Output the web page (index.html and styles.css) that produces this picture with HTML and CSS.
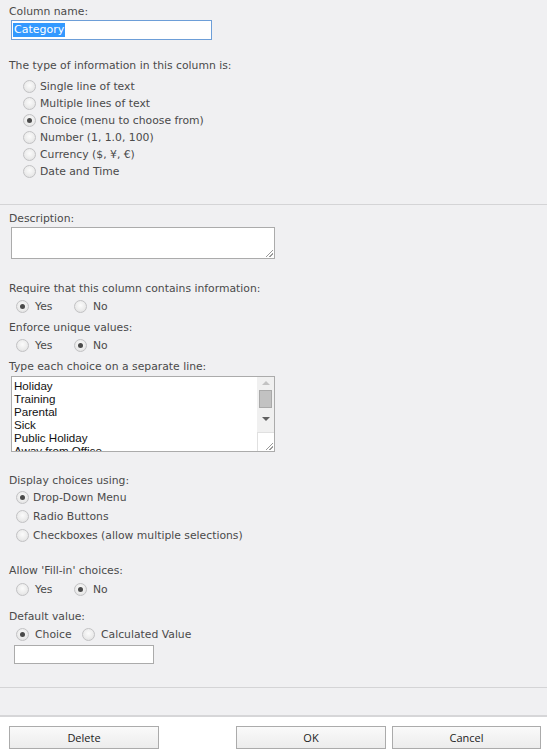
FILE: index.html
```html
<!DOCTYPE html>
<html>
<head>
<meta charset="utf-8">
<link rel="stylesheet" href="styles.css">
</head>
<body>
<div class="page">
  <div class="section s1">
    <div class="label">Column name:</div>
    <div class="textbox focused"><span class="sel">Category</span></div>
    <div class="label gap-type">The type of information in this column is:</div>
    <div class="radio-list indent">
      <div class="row"><span class="radio"></span><span>Single line of text</span></div>
      <div class="row"><span class="radio"></span><span>Multiple lines of text</span></div>
      <div class="row"><span class="radio on"></span><span>Choice (menu to choose from)</span></div>
      <div class="row"><span class="radio"></span><span>Number (1, 1.0, 100)</span></div>
      <div class="row"><span class="radio"></span><span>Currency ($, ¥, €)</span></div>
      <div class="row"><span class="radio"></span><span>Date and Time</span></div>
    </div>
  </div>
  <div class="section s2">
    <div class="label">Description:</div>
    <div class="textarea desc"><span class="grip"></span></div>

    <div class="label m-require">Require that this column contains information:</div>
    <div class="inline-row r-require">
      <span class="opt"><span class="radio on"></span><span>Yes</span></span>
      <span class="opt"><span class="radio"></span><span>No</span></span>
    </div>
    <div class="label m-enforce">Enforce unique values:</div>
    <div class="inline-row r-enforce">
      <span class="opt"><span class="radio"></span><span>Yes</span></span>
      <span class="opt"><span class="radio on"></span><span>No</span></span>
    </div>

    <div class="label m-type">Type each choice on a separate line:</div>
    <div class="choices">
      <div class="lines">
        <div>Holiday</div>
        <div>Training</div>
        <div>Parental</div>
        <div>Sick</div>
        <div>Public Holiday</div>
        <div>Away from Office</div>
      </div>
      <div class="scrollbar">
        <div class="sb-track">
          <span class="arrow up"></span>
          <span class="thumb"></span>
          <span class="arrow down"></span>
        </div>
        <div class="sb-corner"><span class="grip"></span></div>
      </div>
    </div>

    <div class="label m-display">Display choices using:</div>
    <div class="radio-list tall">
      <div class="row"><span class="radio on"></span><span>Drop-Down Menu</span></div>
      <div class="row"><span class="radio"></span><span>Radio Buttons</span></div>
      <div class="row"><span class="radio"></span><span>Checkboxes (allow multiple selections)</span></div>
    </div>

    <div class="label m-allow">Allow 'Fill-in' choices:</div>
    <div class="inline-row r-allow">
      <span class="opt"><span class="radio"></span><span>Yes</span></span>
      <span class="opt"><span class="radio on"></span><span>No</span></span>
    </div>

    <div class="label m-default">Default value:</div>
    <div class="inline-row r-default">
      <span class="opt"><span class="radio on"></span><span>Choice</span></span>
      <span class="opt"><span class="radio"></span><span>Calculated Value</span></span>
    </div>
    <div class="textbox small"></div>
  </div>
  <div class="section s3"></div>
  <div class="footer">
    <button class="btn delete">Delete</button>
    <div class="spacer"></div>
    <button class="btn">OK</button>
    <button class="btn cancel">Cancel</button>
  </div>
</div>
</body>
</html>
```

FILE: styles.css
```css
html, body {
  margin: 0;
  padding: 0;
  background: #ffffff;
}
.page {
  width: 547px;
  height: 754px;
  font-family: "DejaVu Sans", Verdana, sans-serif;
  font-size: 10.8px;
  color: #4a4a4a;
}
.section {
  background: #f0f0f2;
  padding-left: 9px;
}
.s1 {
  padding-top: 5px;
  height: 199px;
  border-bottom: 1px solid #d4d4d6;
}
.s2 {
  padding-top: 7px;
  height: 475px;
  border-bottom: 1px solid #d4d4d6;
}
.s3 {
  height: 27px;
  border-bottom: 2px solid #d6d6d8;
}
.label {
  line-height: 14px;
  height: 14px;
  white-space: nowrap;
}
.textbox {
  box-sizing: border-box;
  background: #ffffff;
  border: 1px solid #ababab;
}
.textbox.focused {
  margin-top: 1px;
  margin-left: 2px;
  width: 201px;
  height: 20px;
  border-color: #6d9ed8;
  padding: 2px 0 0 1px;
  font-family: Tahoma, "DejaVu Sans", sans-serif;
  font-size: 11px;
  line-height: 14px;
}
.sel {
  background: #3399ff;
  color: #ffffff;
  display: inline-block;
  padding: 0 1px;
}
.textbox.small {
  margin-top: 2px;
  margin-left: 5px;
  width: 140px;
  height: 19px;
}
.gap-type { margin-top: 19px; }
.radio-list { margin-top: 5px; }
.radio-list.indent { padding-left: 14px; }
.row {
  height: 17px;
  display: flex;
  align-items: center;
  gap: 4px;
  white-space: nowrap;
}
.radio-list.tall { margin-top: 0; padding-left: 7px; }
.radio-list.tall .row { height: 19px; }
.radio {
  box-sizing: border-box;
  width: 13px;
  height: 13px;
  border-radius: 50%;
  border: 1px solid #c2c2c4;
  background: radial-gradient(circle at 50% 40%, #fbfbfb 0%, #ececec 55%, #dcdcdc 100%);
  display: inline-flex;
  align-items: center;
  justify-content: center;
  flex: none;
}
.radio.on::after {
  content: "";
  width: 5px;
  height: 5px;
  border-radius: 50%;
  background: #4a4a4a;
}
.inline-row {
  display: flex;
  height: 17px;
  align-items: center;
  padding-left: 7px;
  white-space: nowrap;
}
.opt {
  display: inline-flex;
  align-items: center;
  gap: 6px;
}
.r-require .opt:first-child, .r-enforce .opt:first-child, .r-allow .opt:first-child { width: 58px; }
.r-default .opt:first-child { width: 66px; }

.textarea {
  box-sizing: border-box;
  background: #ffffff;
  border: 1px solid #ababab;
  position: relative;
}
.desc {
  margin-top: 1px;
  margin-left: 2px;
  width: 264px;
  height: 32px;
}
.grip {
  position: absolute;
  right: 1px;
  bottom: 1px;
  width: 7px;
  height: 7px;
  background: linear-gradient(135deg, transparent 0 45%, #9a9a9a 45% 55%, transparent 55% 70%, #9a9a9a 70% 80%, transparent 80%);
}
.m-require { margin-top: 23px; }
.r-require { margin-top: 2px; }
.m-enforce { margin-top: 6px; }
.r-enforce { margin-top: 2px; }
.m-type { margin-top: 6px; }
.choices {
  margin-top: 2px;
  margin-left: 2px;
  box-sizing: border-box;
  width: 264px;
  height: 76px;
  border: 1px solid #ababab;
  background: #ffffff;
  display: flex;
}
.lines {
  flex: 1;
  overflow: hidden;
  padding: 2px 0 0 2px;
  font-family: Tahoma, "Liberation Sans", sans-serif;
  font-size: 11.6px;
  line-height: 13px;
  color: #111111;
}
.scrollbar {
  width: 17px;
  display: flex;
  flex-direction: column;
  background: #f0f0f0;
}
.sb-track {
  flex: 1;
  display: flex;
  flex-direction: column;
  align-items: center;
  padding-top: 4px;
}
.arrow {
  width: 0;
  height: 0;
  border-left: 4px solid transparent;
  border-right: 4px solid transparent;
}
.arrow.up { border-bottom: 4px solid #c2c2c2; }
.arrow.down { border-top: 4px solid #606060; margin-top: 9px; }
.thumb {
  box-sizing: border-box;
  margin-top: 5px;
  width: 13px;
  height: 18px;
  background: #c2c2c2;
  border: 1px solid #a9a9a9;
}
.sb-corner {
  height: 18px;
  background: #ffffff;
  border-top: 1px solid #e0e0e0;
  border-left: 1px solid #e0e0e0;
  position: relative;
}
.m-display { margin-top: 22px; }
.m-allow { margin-top: 19px; }
.r-allow { margin-top: 3px; }
.m-default { margin-top: 12px; }
.r-default { margin-top: 2px; }

.footer {
  display: flex;
  padding: 9px 6px 0 9px;
  gap: 6px;
  background: #ffffff;
}
.spacer { flex: 1; }
.btn {
  box-sizing: border-box;
  width: 150px;
  height: 23px;
  border: 1px solid #ababab;
  background: linear-gradient(#fafafa, #ececec);
  font-family: "Open Sans", "Noto Sans", sans-serif;
  font-size: 11px;
  color: #222222;
  padding: 0 0 1px 0;
  margin: 0;
}
.btn.cancel { width: 149px; }
```
